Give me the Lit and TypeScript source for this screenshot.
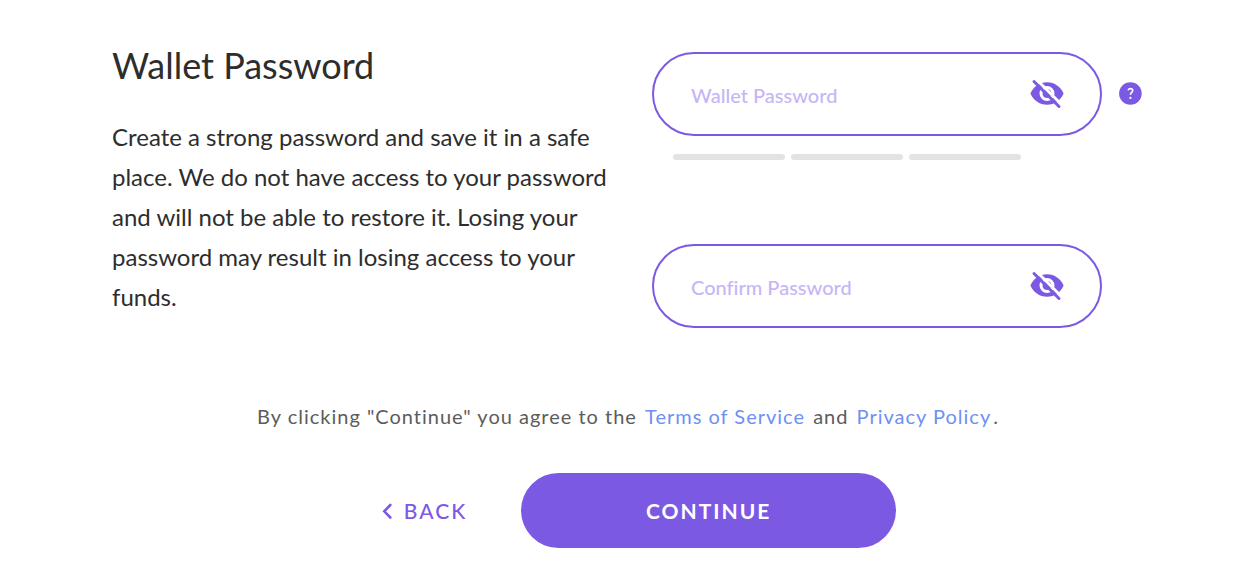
import { LitElement, html, css } from "lit";
import { customElement, property, state } from "lit/decorators.js";

@customElement("password-field")
class PasswordField extends LitElement {
  @property() label = "";
  @property() name = "";
  @state() private shown = false;

  static styles = css`
    :host { display: block; }
    .field {
      display: flex;
      align-items: center;
      box-sizing: border-box;
      height: 84px;
      padding: 0 35px 0 37px;
      border: 2px solid #7c59e3;
      border-radius: 42px;
    }
    input {
      flex: 1;
      min-width: 0;
      height: 40px;
      box-sizing: border-box;
      padding: 2px 0 0;
      border: 0;
      outline: 0;
      background: none;
      color: #2d2d2d;
      font: 500 20px/24px Lato, sans-serif;
      font-variant-ligatures: none;
    }
    input::placeholder { color: #c6b6f5; opacity: 1; }
    button {
      flex: none;
      display: flex;
      padding: 0;
      border: 0;
      background: none;
      color: #7c59e3;
      cursor: pointer;
    }
    svg { width: 36px; height: 36px; }
  `;

  render() {
    return html`<div class="field">
      <input
        type=${this.shown ? "text" : "password"}
        name=${this.name}
        placeholder=${this.label}
        aria-label=${this.label}
      />
      <button type="button" aria-label="Toggle visibility" @click=${() => (this.shown = !this.shown)}>
        <svg viewBox="0 0 36 36" fill="none" aria-hidden="true">
          <path fill="currentColor" d="M1.500 17.500C4.100 10.900 10.500 6.300 18 6.300S31.900 10.900 34.500 17.500C31.900 24.100 25.500 28.700 18 28.700S4.100 24.100 1.500 17.500z" />
          <circle cx="18" cy="17.500" r="6" stroke="#fff" stroke-width="3" />
          <path d="M7 3L33 29" stroke="#fff" stroke-width="3" />
          <path d="M5 5.500L30 30.500" stroke="currentColor" stroke-width="3" stroke-linecap="round" />
        </svg>
      </button>
    </div>`;
  }
}

@customElement("app-root")
class AppRoot extends LitElement {
  static styles = css`
    :host {
      display: block;
      background: #fff;
      color: #2d2d2d;
      font-family: Lato, sans-serif;
    }
    form { padding: 42px 91px 20px 112px; }
    .top { display: flex; gap: 40px; }
    .intro { flex: 1 1 0; min-width: 0; }
    h1 { margin: 0; font-size: 36px; line-height: 46px; font-weight: 400; }
    .intro p {
      margin: 29px 0 0;
      font-size: 24px;
      line-height: 40px;
    }
    .fields { flex: 0 0 490px; padding-top: 10px; }
    .row { display: flex; align-items: center; gap: 16px; }
    password-field { flex: 0 0 450px; }
    .help {
      display: flex;
      padding: 0;
      border: 0;
      background: none;
      cursor: pointer;
    }
    .help svg { width: 24px; height: 24px; }
    .strength { display: flex; gap: 6px; padding: 18px 0 84px 21px; }
    .bar { width: 112px; height: 6px; border-radius: 3px; background: #e3e3e3; }
    .terms {
      margin: 71px 0 0;
      padding-left: 2px;
      text-align: center;
      font-size: 20px;
      line-height: 34px;
      letter-spacing: 1px;
      color: #5c5c5c;
    }
    a { padding: 0 2px; color: #6e8ff5; text-decoration: none; }
    .actions {
      display: flex;
      justify-content: center;
      align-items: center;
      gap: 54px;
      margin-top: 40px;
      padding-left: 24px;
    }
    .back, .continue {
      border: 0;
      font: 700 21px/24px Lato, sans-serif;
      letter-spacing: 2px;
      cursor: pointer;
    }
    .back {
      display: flex;
      align-items: center;
      gap: 12px;
      padding: 0;
      background: none;
      color: #7c59e3;
      font-weight: 500;
    }
    .back svg { width: 10px; height: 16px; }
    .continue {
      width: 375px;
      height: 75px;
      border-radius: 38px;
      background: #7c59e3;
      color: #fff;
    }
  `;

  render() {
    return html`<form @submit=${(e: Event) => e.preventDefault()}>
      <div class="top">
        <section class="intro">
          <h1>Wallet Password</h1>
          <p>
            Create a strong password and save it in a safe place. We do not have access to your
            password and will not be able to restore it. Losing your password may result in losing
            access to your funds.
          </p>
        </section>
        <section class="fields">
          <div class="row">
            <password-field label="Wallet Password" name="password"></password-field>
            <button type="button" class="help" aria-label="Password help">
              <svg viewBox="0 0 24 24" aria-hidden="true">
                <circle cx="12.400" cy="11.500" r="11.300" fill="#7c59e3" />
                <path d="M10 8.300c.5-1.300 1.400-1.700 2.500-1.700 1.300 0 2.200.7 2.200 1.900 0 1.700-2.300 2-2.300 4.200" fill="none" stroke="#fff" stroke-width="1.600" />
                <circle cx="12.400" cy="15.900" r="1.100" fill="#fff" />
              </svg>
            </button>
          </div>
          <div class="strength">
            <div class="bar"></div>
            <div class="bar"></div>
            <div class="bar"></div>
          </div>
          <div class="row">
            <password-field label="Confirm Password" name="confirm"></password-field>
          </div>
        </section>
      </div>
      <p class="terms">
        By clicking "Continue" you agree to the <a href="#terms">Terms of Service</a> and
        <a href="#privacy">Privacy Policy</a>.
      </p>
      <div class="actions">
        <button type="button" class="back">
          <svg viewBox="0 0 10 16" fill="none" stroke="currentColor" stroke-width="2.600" stroke-linecap="round" aria-hidden="true">
            <path d="M8.300 2L2.300 8.300L8.300 14.500" />
          </svg>
          BACK
        </button>
        <button type="submit" class="continue">CONTINUE</button>
      </div>
    </form>`;
  }
}
